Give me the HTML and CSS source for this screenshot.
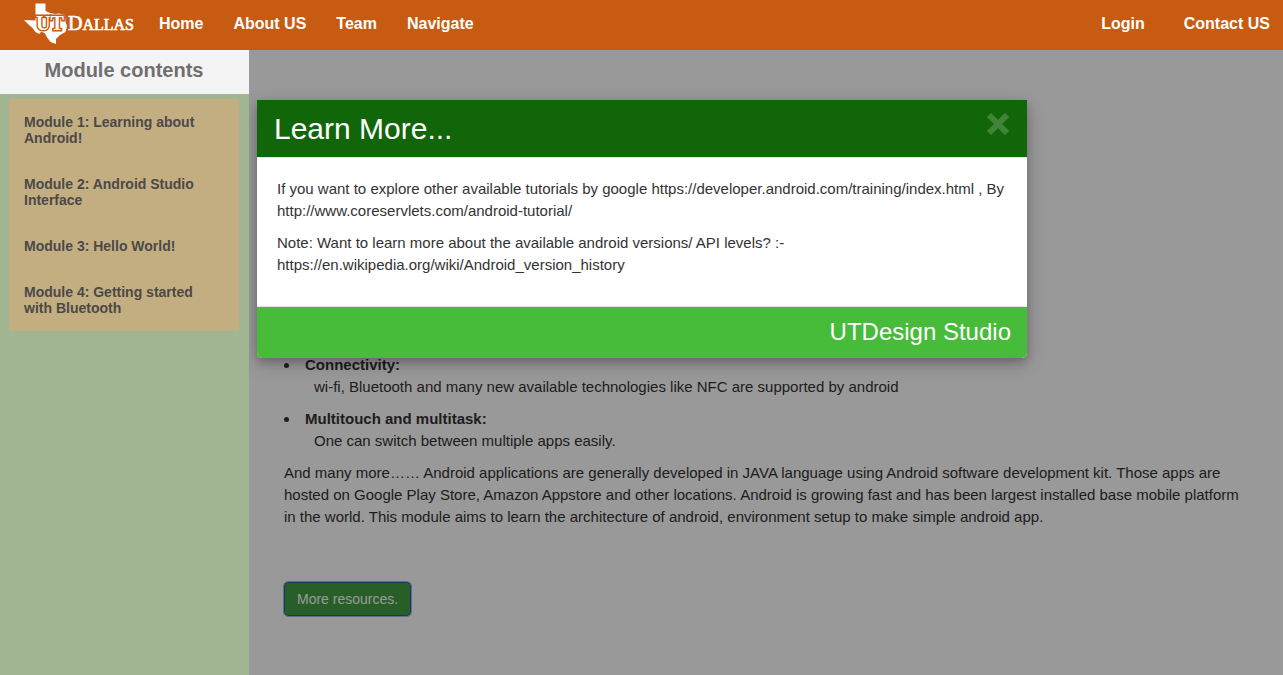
FILE: index.html
```html
<!DOCTYPE html>
<html lang="en">
<head>
<meta charset="utf-8">
<meta name="viewport" content="width=device-width, initial-scale=1">
<title>Module contents</title>
<link rel="stylesheet" href="styles.css">
</head>
<body>
<header class="topbar">
  <a class="brand" href="#" aria-label="UT Dallas home">
    <svg class="logo" width="112" height="44" viewBox="0 0 112 44" aria-hidden="true">
      <path class="logo-state" d="M12.500 1.500 L22.500 1.500 L22.500 9 L27 11 L32 12 L36 11.500 L42 13 L42.500 20 L44 24 L42.500 30 L37 33 L33 37 L33 42 L27.500 40 L24.500 36 L22 31.500 L18.500 29.500 L16 32 L12.500 30 L9.500 26 L5 22 L1 18 L12.500 18.500 Z"/>
      <text class="logo-ut" x="13" y="28">UT</text>
      <text class="logo-name" x="45" y="28"><tspan class="logo-initial">D</tspan>ALLAS</text>
    </svg>
  </a>
  <nav class="nav">
    <a href="#">Home</a>
    <a href="#">About US</a>
    <a href="#">Team</a>
    <a href="#">Navigate</a>
  </nav>
  <nav class="nav nav-right">
    <a href="#">Login</a>
    <a href="#">Contact US</a>
  </nav>
</header>
<div class="page">
  <aside class="sidebar">
    <h2 class="sidebar-title">Module contents</h2>
    <nav class="modules">
      <a href="#">Module 1: Learning about Android!</a>
      <a href="#">Module 2: Android Studio Interface</a>
      <a href="#">Module 3: Hello World!</a>
      <a href="#">Module 4: Getting started with Bluetooth</a>
    </nav>
  </aside>
  <main class="content">
    <ul class="features">
      <li><strong>Connectivity:</strong>
        <p>wi-fi, Bluetooth and many new available technologies like NFC are supported by android</p></li>
      <li><strong>Multitouch and multitask:</strong>
        <p>One can switch between multiple apps easily.</p></li>
    </ul>
    <p class="summary">And many more…… Android applications are generally developed in JAVA language using Android software development kit. Those apps are hosted on Google Play Store, Amazon Appstore and other locations. Android is growing fast and has been largest installed base mobile platform in the world. This module aims to learn the architecture of android, environment setup to make simple android app.</p>
    <button class="more" type="button">More resources.</button>
    <div class="backdrop">
      <section class="modal" role="dialog" aria-labelledby="modal-title">
        <header class="modal-header">
          <h1 class="modal-title" id="modal-title">Learn More...</h1>
          <button class="close" type="button" aria-label="Close">
            <svg width="24" height="24" viewBox="0 0 24 24" aria-hidden="true"><path d="M3 3 L21 21 M21 3 L3 21"/></svg>
          </button>
        </header>
        <div class="modal-body">
          <p>If you want to explore other available tutorials by google https://developer.android.com/training/index.html , By http://www.coreservlets.com/android-tutorial/</p>
          <p>Note: Want to learn more about the available android versions/ API levels? :- https://en.wikipedia.org/wiki/Android_version_history</p>
        </div>
        <footer class="modal-footer">UTDesign Studio</footer>
      </section>
    </div>
  </main>
</div>
</body>
</html>
```
FILE: styles.css
```css
* {
  box-sizing: border-box;
}

body {
  display: flex;
  flex-direction: column;
  min-height: 100vh;
  margin: 0;
  color: #333;
  font: 15px/22px "Liberation Sans", Arial, sans-serif;
}

a {
  color: inherit;
  text-decoration: none;
}

.topbar {
  display: flex;
  align-items: center;
  min-height: 50px;
  padding: 0 13px 0 23px;
  background: #c75b12;
  color: #fff;
  font-size: 16px;
  font-weight: bold;
}

.brand {
  display: flex;
  margin-right: 24px;
  padding-bottom: 2px;
}

.logo {
  fill: #fff;
  font-family: "Liberation Serif", "Times New Roman", serif;
}

.logo-ut {
  font-size: 20px;
  font-weight: bold;
  stroke: #c75b12;
  stroke-width: 3px;
  paint-order: stroke;
}

.logo-name {
  font-size: 16px;
  font-weight: normal;
  stroke: #fff;
  stroke-width: 0.7px;
}

.logo-initial {
  font-size: 20px;
}

.nav {
  display: flex;
  gap: 30px;
  padding-bottom: 2px;
}

.nav-right {
  gap: 39px;
  margin-left: auto;
}

.page {
  display: flex;
  flex: 1;
}

.sidebar {
  flex: none;
  width: 249px;
  background: #a1b593;
}

.sidebar-title {
  margin: 0 0 5px;
  padding: 9px 1px 13px 0;
  background: #f4f4f4;
  color: #706f6f;
  font-size: 20px;
  line-height: 22px;
  text-align: center;
}

.modules {
  margin: 0 10px 0 9px;
  background: #c3ae82;
  color: #4b4947;
  font-size: 14px;
  font-weight: bold;
  line-height: 16px;
}

.modules a {
  display: block;
  padding: 15px 40px 15px 15px;
}

.content {
  position: relative;
  flex: 1;
  padding: 304px 35px 58px;
  background: #fff;
}

.features {
  margin: 0;
  padding: 0;
  list-style-position: inside;
}

.features li {
  margin-bottom: 10px;
}

.features p {
  margin: 0;
  padding-left: 30px;
}

.summary {
  margin: 0 0 54px;
}

.more {
  height: 34px;
  padding: 0 12px;
  border: 1px solid #30609a;
  border-radius: 4px;
  outline: 1px solid #9ab8f5;
  background: #449d44;
  color: #fff;
  font: inherit;
  font-size: 14px;
}

.backdrop {
  position: absolute;
  inset: 0;
  padding: 50px 8px;
  overflow: hidden;
  background: rgba(0, 0, 0, 0.4);
}

.modal {
  max-width: 770px;
  border-radius: 0 0 5px 5px;
  background: #fff;
  box-shadow: 0 4px 8px rgba(0, 0, 0, 0.2), 0 6px 20px rgba(0, 0, 0, 0.2);
}

.modal-header {
  display: flex;
  align-items: flex-start;
  justify-content: space-between;
  padding: 12px 17px;
  border-bottom: 1px solid #e5e5e5;
  background: #106608;
  background-clip: padding-box;
}

.modal-title {
  margin: 0;
  color: #fff;
  font-size: 30px;
  font-weight: normal;
  line-height: 33px;
}

.close {
  display: flex;
  padding: 0;
  border: 0;
  background: none;
}

.close path {
  fill: none;
  stroke: #408537;
  stroke-width: 6px;
}

.modal-body {
  padding: 20px 20px 30px;
}

.modal-body p {
  margin: 0;
}

.modal-body p + p {
  margin-top: 10px;
}

.modal-footer {
  padding: 11px 16px 13px;
  border-top: 1px solid #e5e5e5;
  border-radius: 0 0 5px 5px;
  background: #47bb3a;
  background-clip: padding-box;
  color: #fff;
  font-size: 24px;
  line-height: 27px;
  text-align: right;
}
```
